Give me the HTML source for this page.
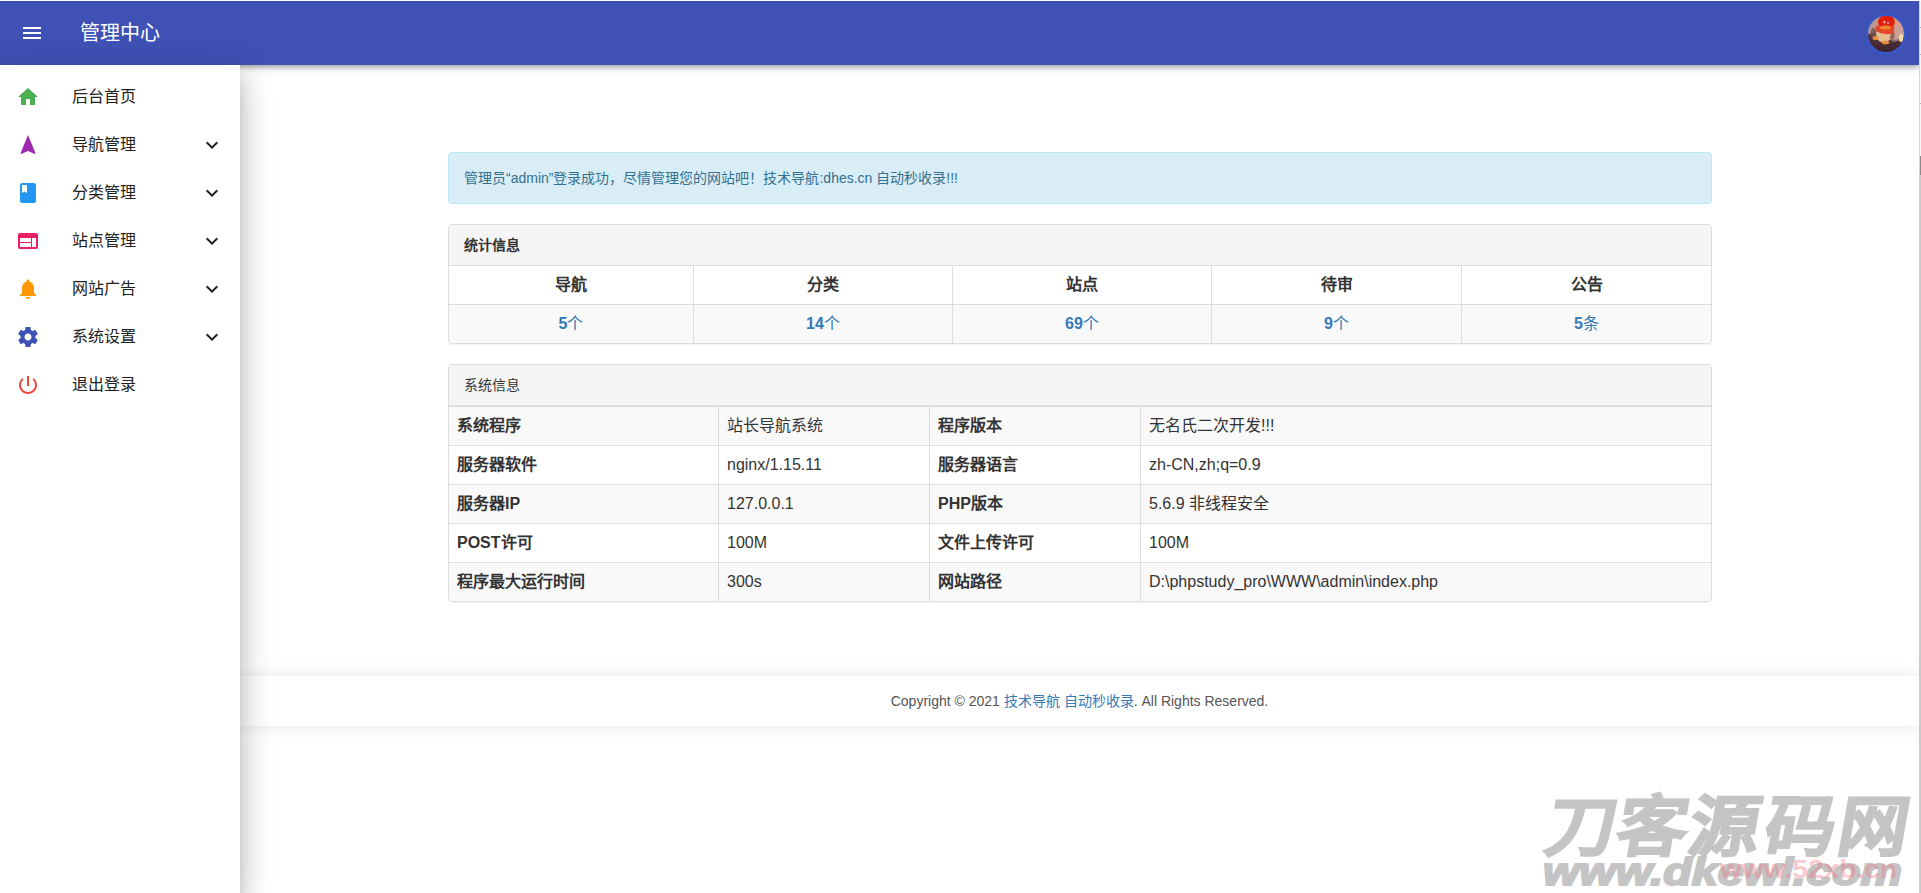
<!DOCTYPE html>
<html lang="zh-CN"><head><meta charset="utf-8">
<style>
*{box-sizing:border-box;}
html,body{margin:0;padding:0;width:1921px;height:893px;overflow:hidden;background:#fff;
font-family:"Liberation Sans",sans-serif;color:#333;}
#topline{position:absolute;left:0;top:0;width:1921px;height:1px;background:#fff;z-index:60;}
#rstrip{position:absolute;left:1919px;top:0;width:2px;height:893px;background:#f6f6f6;border-left:1px solid #d6d6d6;z-index:50;}
#header{position:absolute;left:0;top:1px;width:1919px;height:64px;background:#3f51b5;z-index:20;
box-shadow:0 2px 4px -1px rgba(0,0,0,.2),0 4px 5px 0 rgba(0,0,0,.14),0 1px 10px 0 rgba(0,0,0,.12);}
#header .menu{position:absolute;left:20px;top:20px;width:24px;height:24px;}
#header .title{position:absolute;left:80px;top:17px;font-size:20px;line-height:30px;color:#fff;}
#avatar{position:absolute;left:1868px;top:15px;width:36px;height:36px;border-radius:50%;overflow:hidden;
box-shadow:0 0 3px 1px rgba(40,110,255,.6);}
#side{position:absolute;left:0;top:65px;width:240px;height:828px;background:#fff;z-index:30;
box-shadow:0 8px 10px -5px rgba(0,0,0,.2),0 16px 24px 2px rgba(0,0,0,.14),0 6px 30px 5px rgba(0,0,0,.12);}
#side ul{list-style:none;margin:0;padding:8px 0 0 0;}
#side li{position:relative;height:48px;}
#side li svg.ic{position:absolute;left:16px;top:12px;width:24px;height:24px;}
#side li svg.chev{position:absolute;left:200px;top:12px;width:24px;height:24px;}
#side li span{position:absolute;left:72px;top:12px;font-size:16px;line-height:24px;color:#212121;}
#main{position:absolute;left:240px;top:65px;width:1679px;height:828px;background:#fff;}
.alert{position:absolute;left:448px;top:152px;width:1264px;height:52px;background:#d9edf7;border:1px solid #bce8f1;border-radius:4px;
color:#31708f;font-size:14px;line-height:20px;padding:15px;}
.panel{position:absolute;left:448px;width:1264px;background:#fff;border:1px solid #ddd;border-radius:4px;overflow:hidden;
box-shadow:0 1px 1px rgba(0,0,0,.05);}
.panel .hd{height:41px;background:#f5f5f5;border-bottom:1px solid #ddd;padding:10px 15px;font-size:14px;line-height:20px;color:#333;}
table{border-collapse:collapse;width:100%;font-size:16px;}
td,th{border:1px solid #ddd;padding:8px;line-height:22px;height:39px;}
#stats{top:224px;height:120px;}
#stats table{margin:-1px -1px 0 -1px;width:1264px;}
#stats th{text-align:center;font-weight:bold;background:#fff;}
#stats td{text-align:center;background:#f9f9f9;color:#337ab7;}
#sys{top:364px;height:238px;}
#sys table{margin:0 -1px 0 -1px;width:1264px;border-top:1px solid #ddd;}
#sys td{text-align:left;}
#sys tr:nth-child(odd) td{background:#f9f9f9;}
#sys td.l{font-weight:bold;}
#footer{position:absolute;left:240px;top:676px;width:1679px;height:50px;background:#fff;
box-shadow:0 0 15px rgba(0,0,0,.1);font-size:14px;line-height:50px;text-align:center;color:#555;z-index:5;}
#footer a{color:#337ab7;text-decoration:none;}
#wm{position:absolute;left:1530px;top:780px;width:389px;height:113px;z-index:40;}
</style></head>
<body>
<div id="topline"></div>
<div id="header">
  <svg class="menu" viewBox="0 0 24 24"><path fill="#fff" d="M3 18h18v-2H3v2zm0-5h18v-2H3v2zm0-7v2h18V6H3z"/></svg>
  <div class="title">管理中心</div>
  <div id="avatar"><svg width="36" height="36" viewBox="0 0 36 36" style="filter:blur(0.6px)">
    <defs>
      <linearGradient id="ag" x1="0" y1="0" x2="1" y2="0.3"><stop offset="0" stop-color="#a89a98"/><stop offset=".55" stop-color="#d89080"/><stop offset="1" stop-color="#e8a080"/></linearGradient>
      <linearGradient id="bg2" x1="0" y1="0" x2="0" y2="1"><stop offset="0" stop-color="#5a3a3a"/><stop offset="1" stop-color="#3a2030"/></linearGradient>
    </defs>
    <rect width="36" height="36" fill="url(#ag)"/>
    <path d="M0 18 L8 17 L12 26 L36 22 L36 36 L0 36z" fill="url(#bg2)"/>
    <path d="M26 9 L35 10 L35 24 L24 26z" fill="#b8a4a0" opacity=".6"/>
    <ellipse cx="5.5" cy="17" rx="3" ry="5" fill="#6a5050" opacity=".8"/>
    <ellipse cx="24" cy="19" rx="2.5" ry="5" fill="#6a5050" opacity=".7"/>
    <path d="M8 16 Q8 26 15 26 Q23 26 23 16z" fill="#e4bc90"/>
    <ellipse cx="7.5" cy="22" rx="3" ry="2" fill="#e89040"/>
    <ellipse cx="17.5" cy="26.5" rx="4" ry="1.8" fill="#e89040"/>
    <path d="M7.5 10 Q17 9 26.5 11 L25.5 17.5 Q16 19.5 8.5 15.5z" fill="#e44428"/>
    <ellipse cx="18.4" cy="6" rx="8.4" ry="7" fill="#e41c0a"/>
    <ellipse cx="17.5" cy="11.5" rx="5.8" ry="2" fill="#ee8830"/>
    <ellipse cx="16.4" cy="6" rx="1" ry="1.6" fill="#f0c0a0"/>
    <ellipse cx="20" cy="7" rx="1.2" ry="1.3" fill="#f080a0"/>
    <ellipse cx="33" cy="22" rx="2" ry="4" fill="#f8e0a0"/>
  </svg></div>
</div>
<div id="side"><ul>
  <li><svg class="ic" viewBox="0 0 24 24"><path fill="#4caf50" d="M10 20v-6h4v6h5v-8h3L12 3 2 12h3v8z"/></svg><span>后台首页</span></li>
  <li><svg class="ic" viewBox="0 0 24 24"><path fill="#9c27b0" d="M12 2L4.5 20.29l.71.71L12 18l6.79 3 .71-.71z"/></svg><span>导航管理</span><svg class="chev" viewBox="0 0 24 24"><path fill="#212121" d="M7.41 8.59L12 13.17l4.59-4.58L18 10l-6 6-6-6 1.41-1.41z"/></svg></li>
  <li><svg class="ic" viewBox="0 0 24 24"><path fill="#2196f3" d="M18 2H6c-1.1 0-2 .9-2 2v16c0 1.1.9 2 2 2h12c1.1 0 2-.9 2-2V4c0-1.1-.9-2-2-2zM6 4h5v8l-2.5-1.5L6 12V4z"/></svg><span>分类管理</span><svg class="chev" viewBox="0 0 24 24"><path fill="#212121" d="M7.41 8.59L12 13.17l4.59-4.58L18 10l-6 6-6-6 1.41-1.41z"/></svg></li>
  <li><svg class="ic" viewBox="0 0 24 24"><path fill="#e91e63" d="M20 4H4c-1.1 0-1.99.9-1.99 2L2 18c0 1.1.9 2 2 2h16c1.1 0 2-.9 2-2V6c0-1.1-.9-2-2-2zm-5 14H4v-4h11v4zm0-5H4V9h11v4zm5 5h-4V9h4v9z"/></svg><span>站点管理</span><svg class="chev" viewBox="0 0 24 24"><path fill="#212121" d="M7.41 8.59L12 13.17l4.59-4.58L18 10l-6 6-6-6 1.41-1.41z"/></svg></li>
  <li><svg class="ic" viewBox="0 0 24 24"><path fill="#ff9800" d="M12 22c1.1 0 2-.9 2-2h-4c0 1.1.89 2 2 2zm6-6v-5c0-3.07-1.64-5.64-4.5-6.32V4c0-.83-.67-1.5-1.5-1.5s-1.5.67-1.5 1.5v.68C7.63 5.36 6 7.92 6 11v5l-2 2v1h16v-1l-2-2z"/></svg><span>网站广告</span><svg class="chev" viewBox="0 0 24 24"><path fill="#212121" d="M7.41 8.59L12 13.17l4.59-4.58L18 10l-6 6-6-6 1.41-1.41z"/></svg></li>
  <li><svg class="ic" viewBox="0 0 24 24"><path fill="#3f51b5" d="M19.43 12.98c.04-.32.07-.64.07-.98s-.03-.66-.07-.98l2.11-1.65c.19-.15.24-.42.12-.64l-2-3.46c-.12-.22-.39-.3-.61-.22l-2.49 1c-.52-.4-1.08-.73-1.69-.98l-.38-2.65C14.46 2.18 14.25 2 14 2h-4c-.25 0-.46.18-.49.42l-.38 2.65c-.61.25-1.17.59-1.69.98l-2.49-1c-.23-.09-.49 0-.61.22l-2 3.46c-.13.22-.07.49.12.64l2.11 1.65c-.04.32-.07.65-.07.98s.03.66.07.98l-2.11 1.65c-.19.15-.24.42-.12.64l2 3.46c.12.22.39.3.61.22l2.49-1c.52.4 1.08.73 1.69.98l.38 2.65c.03.24.24.42.49.42h4c.25 0 .46-.18.49-.42l.38-2.65c.61-.25 1.17-.59 1.69-.98l2.49 1c.23.09.49 0 .61-.22l2-3.46c.12-.22.07-.49-.12-.64l-2.11-1.65zM12 15.5c-1.93 0-3.5-1.57-3.5-3.5s1.57-3.5 3.5-3.5 3.5 1.57 3.5 3.5-1.57 3.5-3.5 3.5z"/></svg><span>系统设置</span><svg class="chev" viewBox="0 0 24 24"><path fill="#212121" d="M7.41 8.59L12 13.17l4.59-4.58L18 10l-6 6-6-6 1.41-1.41z"/></svg></li>
  <li><svg class="ic" viewBox="0 0 24 24"><path fill="#f44336" d="M13 3h-2v10h2V3zm4.83 2.17l-1.42 1.42C17.99 7.86 19 9.81 19 12c0 3.87-3.13 7-7 7s-7-3.13-7-7c0-2.19 1.01-4.14 2.58-5.42L6.17 5.17C4.23 6.82 3 9.26 3 12c0 4.97 4.03 9 9 9s9-4.03 9-9c0-2.74-1.23-5.18-3.17-6.83z"/></svg><span>退出登录</span></li>
</ul></div>

<div class="alert">管理员“admin”登录成功，尽情管理您的网站吧！技术导航:dhes.cn 自动秒收录!!!</div>

<div class="panel" id="stats">
  <div class="hd"><b>统计信息</b></div>
  <table>
    <tr><th style="width:245px">导航</th><th style="width:259px">分类</th><th style="width:259px">站点</th><th style="width:250px">待审</th><th>公告</th></tr>
    <tr><td><b>5</b>个</td><td><b>14</b>个</td><td><b>69</b>个</td><td><b>9</b>个</td><td><b>5</b>条</td></tr>
  </table>
</div>

<div class="panel" id="sys">
  <div class="hd">系统信息</div>
  <table>
    <tr><td class="l" style="width:270px">系统程序</td><td style="width:211px">站长导航系统</td><td class="l" style="width:211px">程序版本</td><td>无名氏二次开发!!!</td></tr>
    <tr><td class="l">服务器软件</td><td>nginx/1.15.11</td><td class="l">服务器语言</td><td>zh-CN,zh;q=0.9</td></tr>
    <tr><td class="l">服务器IP</td><td>127.0.0.1</td><td class="l">PHP版本</td><td>5.6.9 非线程安全</td></tr>
    <tr><td class="l">POST许可</td><td>100M</td><td class="l">文件上传许可</td><td>100M</td></tr>
    <tr><td class="l">程序最大运行时间</td><td>300s</td><td class="l">网站路径</td><td>D:\phpstudy_pro\WWW\admin\index.php</td></tr>
  </table>
</div>

<div id="footer">Copyright © 2021 <a>技术导航 自动秒收录</a>. All Rights Reserved.</div>

<div id="rstrip"><div style="position:absolute;left:0;top:27px;width:1px;height:1px;background:#b0b0b0"></div><div style="position:absolute;left:0;top:54px;width:1px;height:1px;background:#b0b0b0"></div><div style="position:absolute;left:0;top:103px;width:1px;height:1px;background:#b0b0b0"></div><div style="position:absolute;left:0;top:156px;width:1px;height:19px;background:#8a8a8a"></div><div style="position:absolute;left:-1px;top:175px;width:2px;height:718px;background:#cacaca"></div></div>
<svg id="wm" width="389" height="113" viewBox="0 0 389 113">
  <text transform="translate(13,70) skewX(-10) scale(1.06,1)" font-size="66" font-weight="900" fill="#c4c4c4" stroke="#c4c4c4" stroke-width="2" style="font-family:'Liberation Sans',sans-serif">刀</text>
  <text transform="translate(84,70) skewX(-10) scale(1.06,1)" font-size="66" font-weight="900" fill="#c4c4c4" stroke="#c4c4c4" stroke-width="2" style="font-family:'Liberation Sans',sans-serif">客</text>
  <text transform="translate(156,70) skewX(-10) scale(1.06,1)" font-size="66" font-weight="900" fill="#c4c4c4" stroke="#c4c4c4" stroke-width="2" style="font-family:'Liberation Sans',sans-serif">源</text>
  <text transform="translate(232,70) skewX(-10) scale(1.06,1)" font-size="66" font-weight="900" fill="#c4c4c4" stroke="#c4c4c4" stroke-width="2" style="font-family:'Liberation Sans',sans-serif">码</text>
  <text transform="translate(305,70) skewX(-10) scale(1.06,1)" font-size="66" font-weight="900" fill="#c4c4c4" stroke="#c4c4c4" stroke-width="2" style="font-family:'Liberation Sans',sans-serif">网</text>
  <text x="13" y="105" textLength="359" lengthAdjust="spacingAndGlyphs" font-size="38" font-weight="bold" font-style="italic" fill="#c4c4c4" stroke="#c4c4c4" stroke-width="2" style="font-family:'Liberation Sans',sans-serif">www.dkewl.com</text>
  <text x="190" y="98" textLength="177" lengthAdjust="spacingAndGlyphs" font-size="25" font-weight="bold" fill="rgba(240,115,130,0.4)" style="font-family:'Liberation Sans',sans-serif">www.52xb.cn</text>
</svg>
</body></html>
